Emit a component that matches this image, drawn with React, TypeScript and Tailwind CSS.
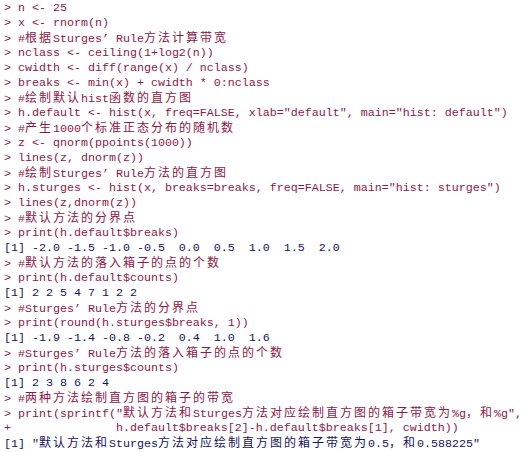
import React from "react"

type Line = { kind: "in" | "out"; text: string }

const lines: Line[] = [
  { kind: "in", text: "> n <- 25" },
  { kind: "in", text: "> x <- rnorm(n)" },
  { kind: "in", text: "> #根据Sturges’ Rule方法计算带宽" },
  { kind: "in", text: "> nclass <- ceiling(1+log2(n))" },
  { kind: "in", text: "> cwidth <- diff(range(x) / nclass)" },
  { kind: "in", text: "> breaks <- min(x) + cwidth * 0:nclass" },
  { kind: "in", text: "> #绘制默认hist函数的直方图" },
  { kind: "in", text: '> h.default <- hist(x, freq=FALSE, xlab="default", main="hist: default")' },
  { kind: "in", text: "> #产生1000个标准正态分布的随机数" },
  { kind: "in", text: "> z <- qnorm(ppoints(1000))" },
  { kind: "in", text: "> lines(z, dnorm(z))" },
  { kind: "in", text: "> #绘制Sturges’ Rule方法的直方图" },
  { kind: "in", text: '> h.sturges <- hist(x, breaks=breaks, freq=FALSE, main="hist: sturges")' },
  { kind: "in", text: "> lines(z,dnorm(z))" },
  { kind: "in", text: "> #默认方法的分界点" },
  { kind: "in", text: "> print(h.default$breaks)" },
  { kind: "out", text: "[1] -2.0 -1.5 -1.0 -0.5  0.0  0.5  1.0  1.5  2.0" },
  { kind: "in", text: "> #默认方法的落入箱子的点的个数" },
  { kind: "in", text: "> print(h.default$counts)" },
  { kind: "out", text: "[1] 2 2 5 4 7 1 2 2" },
  { kind: "in", text: "> #Sturges’ Rule方法的分界点" },
  { kind: "in", text: "> print(round(h.sturges$breaks, 1))" },
  { kind: "out", text: "[1] -1.9 -1.4 -0.8 -0.2  0.4  1.0  1.6" },
  { kind: "in", text: "> #Sturges’ Rule方法的落入箱子的点的个数" },
  { kind: "in", text: "> print(h.sturges$counts)" },
  { kind: "out", text: "[1] 2 3 8 6 2 4" },
  { kind: "in", text: "> #两种方法绘制直方图的箱子的带宽" },
  { kind: "in", text: '> print(sprintf("默认方法和Sturges方法对应绘制直方图的箱子带宽为%g，和%g",' },
  { kind: "in", text: "+               h.default$breaks[2]-h.default$breaks[1], cwidth))" },
  { kind: "out", text: '[1] "默认方法和Sturges方法对应绘制直方图的箱子带宽为0.5，和0.588225"' },
]

// CJK runs get double cell width like the console font
const CJK = /([\u2E80-\u9FFF\u3000-\u303F\uFF00-\uFFEF]+)/

function Segs({ text }: { text: string }) {
  return (
    <>
      {text.split(CJK).map((part, i) =>
        i % 2 === 1 ? (
          <span key={i} className="leading-none font-['Noto_Sans_CJK_SC',sans-serif] text-[12px] tracking-[2px]">
            {part}
          </span>
        ) : (
          <React.Fragment key={i}>{part}</React.Fragment>
        )
      )}
    </>
  )
}

export default function App() {
  return (
    <div className="w-[531px] h-[452px] overflow-hidden bg-white pt-[1px] pl-[4px] font-['Liberation_Mono','Noto_Sans_CJK_SC',monospace] text-[11.667px]">
      {lines.map((l, i) => (
        <div
          key={i}
          className={
            l.kind === "in"
              ? "h-[15px] leading-[15px] whitespace-pre text-[#8c1848]"
              : "h-[15px] leading-[15px] whitespace-pre text-[#14145e]"
          }
        >
          <Segs text={l.text} />
        </div>
      ))}
    </div>
  )
}
